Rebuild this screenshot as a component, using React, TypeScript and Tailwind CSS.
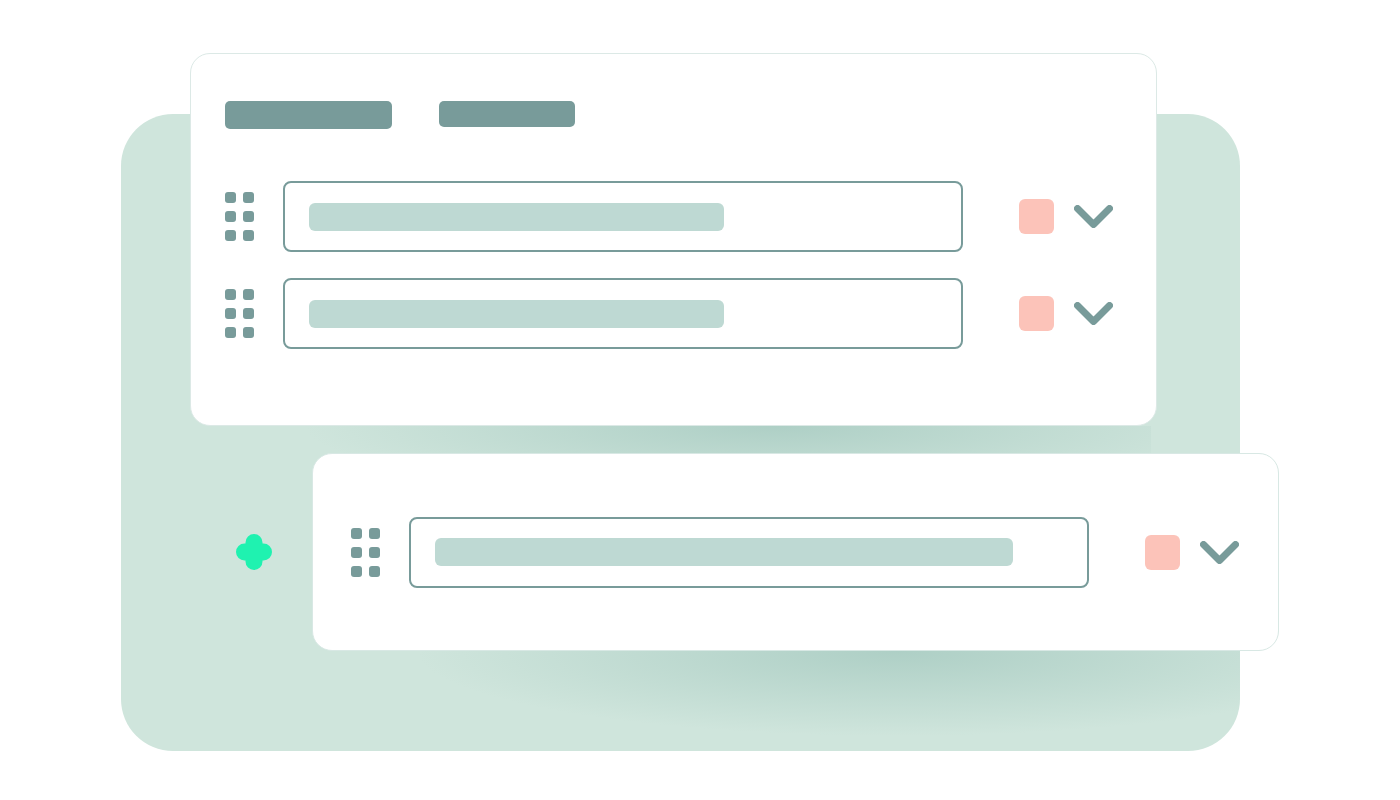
import React from "react";

const Handle = () => (
  <div className="grid grid-cols-[11px_11px] gap-x-[7px] gap-y-[8px] shrink-0">
    {Array.from({ length: 6 }).map((_, i) => (
      <div key={i} className="w-[11px] h-[11px] rounded-[3px] bg-[#789b9a]" />
    ))}
  </div>
);

const Chevron = () => (
  <svg width="39" height="23" viewBox="0 0 39 23" className="shrink-0">
    <path d="M3.5 3.5 L19.5 19.5 L35.5 3.5" fill="none" stroke="#789b9a" strokeWidth="7" strokeLinecap="round" strokeLinejoin="round" />
  </svg>
);

const Row = ({ bar }: { bar: string }) => (
  <div className="flex items-center">
    <Handle />
    <div className="ml-[29px] w-[680px] h-[71px] rounded-[8px] border-2 border-[#789b9a] flex items-center pl-[24px] shrink-0">
      <div className={`h-[28px] rounded-[6px] bg-[#bed9d3] ${bar}`} />
    </div>
    <div className="ml-[56px] w-[35px] h-[35px] rounded-[6px] bg-[#fcc3b9] shrink-0" />
    <div className="ml-[20px]">
      <Chevron />
    </div>
  </div>
);

export default function App() {
  return (
    <div className="relative w-[1400px] h-[800px] bg-white overflow-hidden">
      <div className="absolute left-[121px] top-[114px] w-[1119px] h-[637px] rounded-[52px] bg-[#cfe5dc] overflow-hidden">
        <div className="absolute left-[90px] top-[312px] w-[940px] h-[80px] bg-[radial-gradient(470px_70px_at_60%_0%,rgba(160,198,188,0.7)_0%,rgba(160,198,188,0)_100%)]" />
        <div className="absolute left-[200px] top-[537px] w-[960px] h-[90px] bg-[radial-gradient(480px_85px_at_60%_0%,rgba(160,198,188,0.7)_0%,rgba(160,198,188,0)_100%)]" />
      </div>

      <div className="absolute left-[190px] top-[53px] w-[967px] h-[373px] rounded-[20px] bg-white border border-[#dce9e6] pl-[34px] pt-[47px]">
        <div className="flex items-start gap-[47px]">
          <div className="w-[167px] h-[28px] rounded-[5px] bg-[#789b9a]" />
          <div className="w-[136px] h-[26px] rounded-[5px] bg-[#789b9a]" />
        </div>
        <div className="mt-[52px] flex flex-col gap-[26px]">
          <Row bar="w-[415px]" />
          <Row bar="w-[415px]" />
        </div>
      </div>

      <div className="absolute left-[236px] top-[534px]">
        <svg width="36" height="36" viewBox="0 0 36 36">
          <circle cx="18" cy="18" r="11.5" fill="#1ff2b0" />
          <path d="M18 8.5 L18 27.5 M8.5 18 L27.5 18" stroke="#1ff2b0" strokeWidth="17" strokeLinecap="round" fill="none" />
        </svg>
      </div>

      <div className="absolute left-[312px] top-[453px] w-[967px] h-[198px] rounded-[20px] bg-white border border-[#d8e8e4] pl-[38px] flex items-center">
        <Row bar="w-[578px]" />
      </div>
    </div>
  );
}
